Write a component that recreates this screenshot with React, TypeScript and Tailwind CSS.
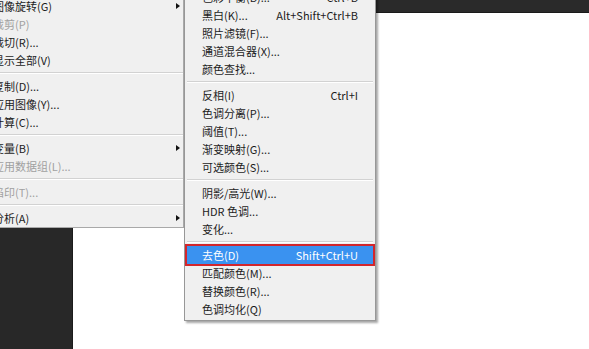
type Item = { t?: string; k?: string; dis?: boolean; arrow?: boolean; active?: boolean; sep?: boolean };

const imageMenu: Item[] = [
  { t: "图像旋转(G)", arrow: true },
  { t: "裁剪(P)", dis: true },
  { t: "裁切(R)..." },
  { t: "显示全部(V)" },
  { sep: true },
  { t: "复制(D)..." },
  { t: "应用图像(Y)..." },
  { t: "计算(C)..." },
  { sep: true },
  { t: "变量(B)", arrow: true },
  { t: "应用数据组(L)...", dis: true },
  { sep: true },
  { t: "陷印(T)...", dis: true },
  { sep: true },
  { t: "分析(A)", arrow: true },
];

const adjustMenu: Item[] = [
  { t: "色彩平衡(B)...", k: "Ctrl+B" },
  { t: "黑白(K)...", k: "Alt+Shift+Ctrl+B" },
  { t: "照片滤镜(F)..." },
  { t: "通道混合器(X)..." },
  { t: "颜色查找..." },
  { sep: true },
  { t: "反相(I)", k: "Ctrl+I" },
  { t: "色调分离(P)..." },
  { t: "阈值(T)..." },
  { t: "渐变映射(G)..." },
  { t: "可选颜色(S)..." },
  { sep: true },
  { t: "阴影/高光(W)..." },
  { t: "HDR 色调..." },
  { t: "变化..." },
  { sep: true },
  { t: "去色(D)", k: "Shift+Ctrl+U", active: true },
  { t: "匹配颜色(M)..." },
  { t: "替换颜色(R)..." },
  { t: "色调均化(Q)" },
];

function Separator() {
  return (
    <div className="h-[8px] flex flex-col justify-center">
      <div className="h-px bg-[#d2d2d2]" />
      <div className="h-px bg-white" />
    </div>
  );
}

export default function App() {
  return (
    <div
      className="relative w-[589px] h-[349px] overflow-hidden bg-white text-[11px] leading-none"
      style={{ fontFamily: '"Noto Sans CJK SC", "Microsoft YaHei", sans-serif' }}
    >
      {/* workspace behind the menus */}
      <div className="flex flex-col h-full">
        <div className="h-[13px] bg-[#2a2a2a] border-b border-[#1a1a1a]" />
        <div className="flex flex-1">
          <div className="w-[73px] bg-[#282828] border-r border-[#1c1c1c]" />
          <div className="flex-1 bg-white" />
        </div>
      </div>

      {/* 图像 menu */}
      <div className="absolute left-[-30px] top-[-3px] w-[214px] bg-[#f0f0f0] border-r border-b border-[#a9a9a9]">
        {imageMenu.map((it, i) =>
          it.sep ? (
            <Separator key={i} />
          ) : (
            <div key={i} className="h-[18px] flex items-center pl-[23px] pr-[3px]">
              <span className={it.dis ? "text-[#a0a0a0]" : "text-[#1c1c1c]"}>{it.t}</span>
              {it.arrow && (
                <span className="ml-auto w-0 h-0 border-y-[3.5px] border-y-transparent border-l-[4px] border-l-[#111]" />
              )}
            </div>
          )
        )}
      </div>

      {/* 调整 submenu */}
      <div className="absolute left-[184px] top-[-13px] w-[192px] bg-[#f0f0f0] border border-[#979797] px-[2px] pb-[2px] shadow-[2px_2px_2px_rgba(0,0,0,0.35)]">
        {adjustMenu.map((it, i) =>
          it.sep ? (
            <Separator key={i} />
          ) : (
            <div
              key={i}
              className={
                it.active
                  ? "h-[18px] flex items-center pl-[15px] pr-[15px] bg-[#3a92f0] text-white outline-2 outline-[#d3262c]"
                  : "h-[18px] flex items-center pl-[15px] pr-[15px] text-[#1c1c1c]"
              }
            >
              <span>{it.t}</span>
              {it.k && <span className="ml-auto">{it.k}</span>}
            </div>
          )
        )}
      </div>
    </div>
  );
}
